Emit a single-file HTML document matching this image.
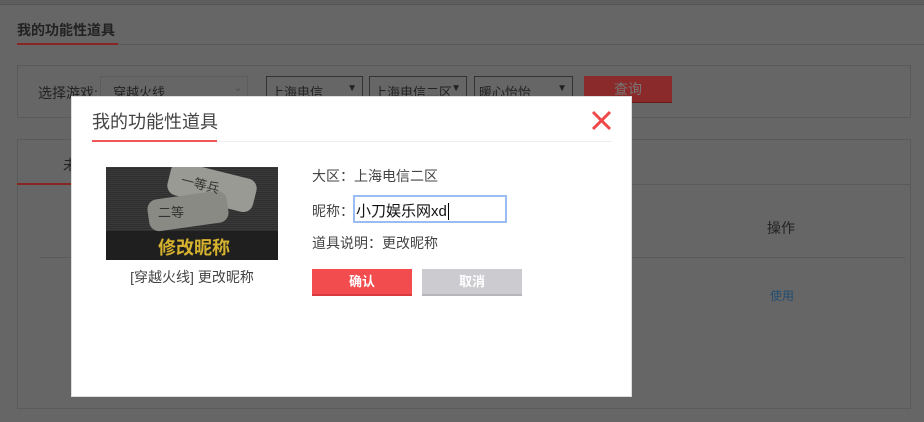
<!DOCTYPE html><html><head><meta charset="utf-8"><style>
body{margin:0;width:924px;height:422px;background:#666;position:relative;overflow:hidden;font-family:"Liberation Sans","Noto Sans CJK SC",sans-serif;font-size:13px;color:#222}
.a{position:absolute}
.sel{position:absolute;top:76px;height:27px;border:1px solid #333;box-sizing:border-box;font-size:13px;color:#222;padding:5px 4px}
.sel b{position:absolute;right:5px;top:6px;font-size:10px}
</style></head><body>
<div class="a" style="left:0;top:0;width:924px;height:4px;background:#5e5e5e;border-bottom:1px solid #555"></div>
<div class="a" style="left:17px;top:20px;font-size:14px;font-weight:bold;color:#222">我的功能性道具</div>
<div class="a" style="left:17px;top:44px;width:907px;height:1px;background:#5a5a5a"></div>
<div class="a" style="left:17px;top:43px;width:101px;height:2px;background:#8a2525"></div>
<div class="a" style="left:17px;top:65px;width:894px;height:53px;border:1px solid #5a5a5a;box-sizing:border-box"></div>
<div class="a" style="left:38px;top:83px;color:#222;font-size:14px">选择游戏:</div>
<div class="sel" style="left:100px;width:148px;border-color:#5c5c5c;padding-left:12px">穿越火线<b style="color:#555">⌄</b></div>
<div class="sel" style="left:266px;width:97px">上海电信<b>▼</b></div>
<div class="sel" style="left:369px;width:98px">上海电信二区<b>▼</b></div>
<div class="sel" style="left:474px;width:99px">暖心怡怡<b>▼</b></div>
<div class="a" style="left:584px;top:76px;width:88px;height:26px;background:#8a2a2a;border-bottom:1px solid #6a1a1a;color:#777;text-align:center;line-height:26px;font-size:14px">查询</div>
<div class="a" style="left:17px;top:139px;width:894px;height:270px;border:1px solid #5a5a5a;box-sizing:border-box"></div>
<div class="a" style="left:17px;top:184px;width:894px;height:1px;background:#5a5a5a"></div>
<div class="a" style="left:17px;top:183px;width:54px;height:2px;background:#8a2525"></div>
<div class="a" style="left:63px;top:155px;font-size:14px">未</div>
<div class="a" style="left:40px;top:257px;width:865px;height:1px;background:#5a5a5a"></div>
<div class="a" style="left:767px;top:218px;font-size:14px">操作</div>
<div class="a" style="left:770px;top:287px;font-size:12px;color:#234d70">使用</div>

<div class="a" style="left:71px;top:96px;width:561px;height:301px;background:#fff;border:1px solid #ddd;box-sizing:border-box"></div>
<div class="a" style="left:92px;top:108px;font-size:18px;color:#444">我的功能性道具</div>
<div class="a" style="left:92px;top:141px;width:520px;height:1px;background:#eee"></div>
<div class="a" style="left:92px;top:140px;width:125px;height:2px;background:#e55"></div>
<svg class="a" style="left:590px;top:109px" width="23" height="23"><path d="M3 3L20 20M20 3L3 20" stroke="#f04848" stroke-width="3"/></svg>
<div class="a" style="left:106px;top:167px;width:172px;height:93px;overflow:hidden;background:repeating-linear-gradient(0deg,#3a3a3a 0 1px,#2e2e2e 1px 2px)">
<div class="a" style="left:0;top:64px;width:172px;height:29px;background:#1f1f1f"></div>
<div class="a" style="left:62px;top:3px;width:88px;height:34px;border-radius:10px;background:#9a9a95;transform:rotate(14deg)"></div>
<div class="a" style="left:42px;top:28px;width:80px;height:32px;border-radius:10px;background:#8a8a85;transform:rotate(-8deg)"></div>
<div class="a" style="left:75px;top:7px;font-size:13px;color:#333;transform:rotate(14deg)">一等兵</div>
<div class="a" style="left:52px;top:35px;font-size:13px;color:#333">二等</div>
<div class="a" style="left:52px;top:67px;font-size:18px;font-weight:bold;color:#d6b22e">修改昵称</div>
</div>
<div class="a" style="left:100px;top:267px;width:184px;text-align:center;color:#444;font-size:14px">[穿越火线] 更改昵称</div>
<div class="a" style="left:312px;top:166px;color:#444;font-size:14px">大区：上海电信二区</div>
<div class="a" style="left:312px;top:201px;color:#444;font-size:14px">昵称：</div>
<div class="a" style="left:353px;top:195px;width:154px;height:28px;border:2px solid #9bbcf2;box-sizing:border-box;padding:3px 1px;font-size:15px;color:#111">小刀娱乐网xd<span style="border-left:1px solid #000;margin-left:1px"></span></div>
<div class="a" style="left:312px;top:233px;color:#444;font-size:14px">道具说明：更改昵称</div>
<div class="a" style="left:312px;top:269px;width:100px;height:27px;background:#f24c4f;border-bottom:2px solid #d83a3d;box-sizing:border-box;color:#fff;font-weight:bold;text-align:center;line-height:25px">确认</div>
<div class="a" style="left:422px;top:269px;width:100px;height:27px;background:#cbcbd0;border-bottom:2px solid #b5b5ba;box-sizing:border-box;color:#fff;font-weight:bold;text-align:center;line-height:25px">取消</div>
</body></html>
